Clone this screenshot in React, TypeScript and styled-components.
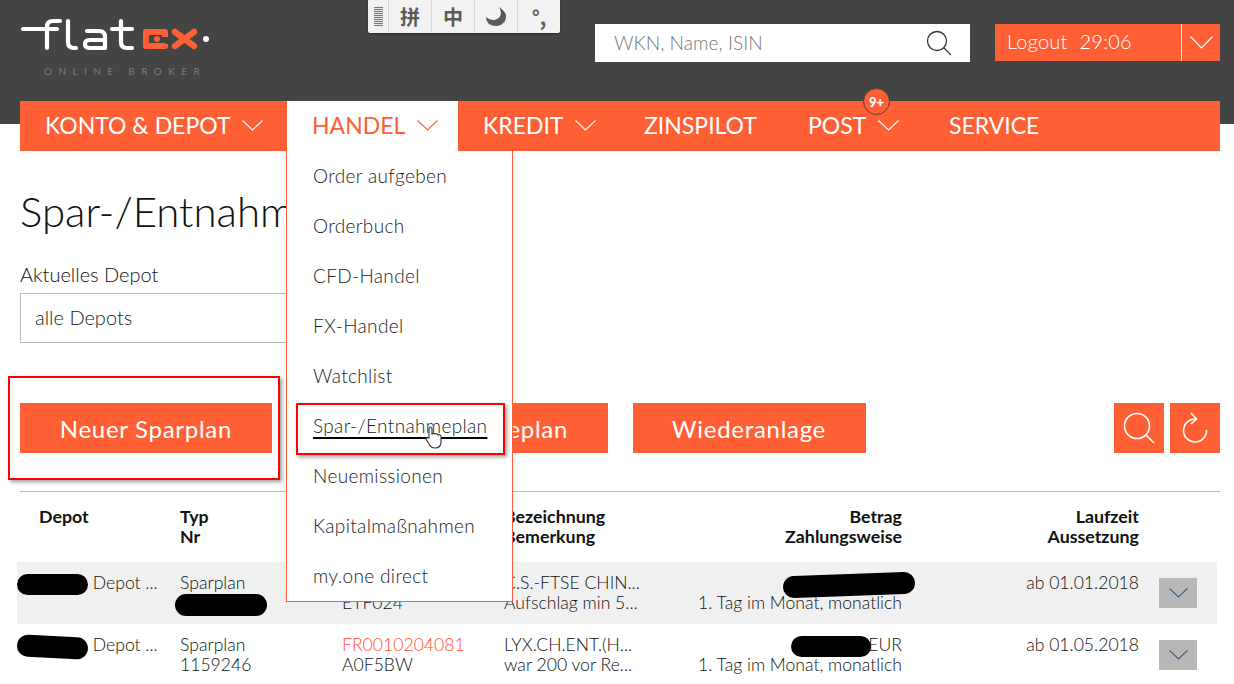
import React from "react";
import styled, { createGlobalStyle } from "styled-components";

const ORANGE = "#ff5f35";
const FONT = `"Lato", "Open Sans", sans-serif`;

const GlobalStyle = createGlobalStyle`
  html, body {
    margin: 0;
    height: 684px;
    overflow: hidden;
    background: #fff;
    font-family: ${FONT};
    color: #1f1f1f;
  }
  * { box-sizing: border-box; }
`;

const Page = styled.div`
  position: relative;
  width: 1234px;
  height: 684px;
  overflow: hidden;
`;

const Header = styled.header`
  height: 124px;
  background: #444444;
  padding: 15px 14px 0 20px;
  display: flex;
  align-items: flex-start;
`;

const LogoBox = styled.div`
  width: 575px;
`;

const LogoTagline = styled.div`
  margin: 10px 0 0 24px;
  font-size: 10px;
  line-height: 12px;
  letter-spacing: 6.4px;
  color: #7a7a7a;
  white-space: nowrap;
`;

const SearchBox = styled.div`
  width: 375px;
  height: 38px;
  margin-top: 9px;
  background: #fff;
  padding: 0 18px 0 19px;
  display: flex;
  align-items: center;
  justify-content: space-between;
  font-size: 19.2px;
  font-weight: 300;
  color: #777;
`;

const SearchText = styled.span`
  padding-bottom: 2px;
`;

const LogoutBox = styled.div`
  width: 225px;
  height: 37px;
  margin: 9px 0 0 25px;
  background: ${ORANGE};
  color: #fff;
  font-size: 20px;
  font-weight: 300;
  display: flex;
  align-items: center;
`;

const LogoutLabel = styled.span`
  flex: 1;
  padding: 0 0 3px 12px;
  display: flex;
  gap: 12px;
  letter-spacing: 0.2px;
`;

const LogoutToggle = styled.span`
  width: 39px;
  height: 100%;
  border-left: 1px solid #fff;
  display: flex;
  align-items: center;
  justify-content: center;
`;

const ImeBar = styled.div`
  position: absolute;
  left: 368px;
  top: 0;
  width: 192px;
  height: 33px;
  display: flex;
  background: #f2f2f2;
  border-radius: 0 0 2px 2px;
  box-shadow: 0 1px 2px rgba(0, 0, 0, 0.35);
`;

const ImeGrip = styled.div`
  width: 20px;
  height: 100%;
  display: flex;
  align-items: center;
  justify-content: center;
  &::before {
    content: "";
    width: 9px;
    height: 19px;
    background: repeating-linear-gradient(#777 0 1px, #e8e8e8 1px 2px);
  }
`;

const ImeKey = styled.div`
  width: 43px;
  height: 100%;
  border-left: 1px solid #d8d8d8;
  display: flex;
  align-items: center;
  justify-content: center;
  font-family: "Noto Sans CJK SC", sans-serif;
  font-weight: 700;
  font-size: 20px;
  color: #5a5a5a;
`;

const Nav = styled.nav`
  height: 50px;
  margin: -23px 14px 0 20px;
  background: ${ORANGE};
  display: flex;
  position: relative;
`;

const NavItem = styled.div<{ $active?: boolean; $w: number }>`
  position: relative;
  width: ${(p) => p.$w}px;
  padding: 0 0 2px 25px;
  display: flex;
  align-items: center;
  gap: 12px;
  font-size: 23px;
  white-space: nowrap;
  background: ${(p) => (p.$active ? "#fff" : "transparent")};
  color: ${(p) => (p.$active ? ORANGE : "#fff")};
`;

const Badge = styled.span`
  position: absolute;
  left: 80px;
  top: -13px;
  width: 27px;
  height: 27px;
  border-radius: 50%;
  background: ${ORANGE};
  border: 1px solid #444;
  color: #fff;
  font-size: 13px;
  font-weight: 900;
  display: flex;
  align-items: center;
  justify-content: center;
`;

const Dropdown = styled.ul`
  position: absolute;
  left: -1px;
  top: 50px;
  width: 227px;
  height: 451px;
  margin: 0;
  padding: 0;
  list-style: none;
  background: #fff;
  border: 1px solid ${ORANGE};
  border-top: 0;
  z-index: 2;
`;

const DropdownItem = styled.li<{ $hover?: boolean }>`
  height: 50px;
  padding: 0 0 2px 26px;
  display: flex;
  align-items: center;
  font-size: 19px;
  font-weight: 300;
  letter-spacing: 0.35px;
  color: #222;
  text-decoration: ${(p) => (p.$hover ? "underline 2px #000" : "none")};
  text-underline-offset: 4px;
`;

const Main = styled.main`
  padding: 35px 14px 0 20px;
`;

const Title = styled.h1`
  margin: 0;
  font-size: 42px;
  line-height: 50px;
  font-weight: 300;
  color: #111;
  white-space: nowrap;
`;

const FieldLabel = styled.div`
  margin-top: 27px;
  font-size: 20px;
  line-height: 22px;
  font-weight: 300;
  color: #111;
`;

const SelectBox = styled.div`
  width: 400px;
  height: 50px;
  margin-top: 8px;
  border: 1px solid #bbb;
  padding: 0 0 2px 14px;
  display: flex;
  align-items: center;
  font-size: 20px;
  font-weight: 300;
  color: #222;
`;

const Actions = styled.div`
  margin-top: 60px;
  display: flex;
  gap: 25px;
`;

const ActionButton = styled.div<{ $w: number }>`
  width: ${(p) => p.$w}px;
  height: 50px;
  background: ${ORANGE};
  color: #fff;
  font-size: 24px;
  letter-spacing: 0.7px;
  padding-right: 40px;
  display: flex;
  align-items: center;
  justify-content: flex-end;
  white-space: nowrap;
`;

const IconGroup = styled.div`
  margin-left: auto;
  display: flex;
  gap: 6px;
`;

const IconButton = styled.div`
  width: 50px;
  height: 50px;
  background: ${ORANGE};
  display: flex;
  align-items: center;
  justify-content: center;
`;

const Divider = styled.hr`
  margin: 38px 0 0;
  border: 0;
  border-top: 1px solid #bbb;
`;

const Table = styled.div`
  margin-left: -3px;
  width: 1200px;
`;

const Grid = styled.div`
  display: grid;
  grid-template-columns: 163px 162px 162px 165px 233px 237px 58px;
  padding-right: 20px;
  line-height: 20px;
`;

const HeadRow = styled(Grid)`
  padding-top: 14px;
  padding-bottom: 16px;
  font-size: 17.8px;
  font-weight: 700;
  color: #111;
`;

const Row = styled(Grid)<{ $shaded?: boolean }>`
  height: 62px;
  padding-top: 11px;
  font-size: 17.6px;
  font-weight: 300;
  background: ${(p) => (p.$shaded ? "#f0f0f0" : "transparent")};
  color: #111;
`;

const Cell = styled.div<{ $right?: boolean; $inset?: number }>`
  text-align: ${(p) => (p.$right ? "right" : "left")};
  padding-left: ${(p) => p.$inset ?? 0}px;
  white-space: nowrap;
`;

const IsinLink = styled.span`
  color: #ff5030;
`;

const Redacted = styled.span<{ $w: number; $h?: number; $tilt?: number; $ml?: number; $mr?: number }>`
  display: inline-block;
  vertical-align: middle;
  width: ${(p) => p.$w}px;
  height: ${(p) => p.$h ?? 21}px;
  margin: -3px ${(p) => p.$mr ?? 0}px -3px ${(p) => p.$ml ?? 0}px;
  border-radius: 11px;
  background: #000;
  transform: rotate(${(p) => p.$tilt ?? 0}deg);
`;

const ExpandButton = styled.div`
  width: 38px;
  height: 30px;
  margin: 5px 0 0 20px;
  background: #b8b8b8;
  display: flex;
  align-items: center;
  justify-content: center;
`;

const Annotation = styled.div<{ $x: number; $y: number; $w: number; $h: number }>`
  position: absolute;
  left: ${(p) => p.$x}px;
  top: ${(p) => p.$y}px;
  width: ${(p) => p.$w}px;
  height: ${(p) => p.$h}px;
  border: 2px solid #f00;
  box-shadow: 2px 2px 4px rgba(0, 0, 0, 0.4);
  z-index: 3;
`;

const HandCursor = styled.svg`
  position: absolute;
  left: 424px;
  top: 425px;
  z-index: 4;
`;

const Chevron = ({ color = "#fff", w = 21, h = 11 }: { color?: string; w?: number; h?: number }) => (
  <svg width={w} height={h} viewBox={`0 0 ${w} ${h}`} fill="none">
    <polyline points={`0.5,0.5 ${w / 2},${h - 1} ${w - 0.5},0.5`} stroke={color} strokeWidth="1.1" />
  </svg>
);

const Logo = () => (
  <svg width="195" height="40" viewBox="20 15 195 40" fill="none" style={{ display: "block" }}>
    <g stroke="#fff" strokeWidth="4.2" strokeLinecap="round" strokeLinejoin="round">
      <path d="M23 29 H57" />
      <path d="M60 21 H53 Q47 21 47 27 V48" />
      <path d="M68 21 V42 Q68 48 74 48 H76" />
      <path d="M87 31 H99 Q105 31 105 37 V48 H90 Q85 48 85 44 Q85 40 90 40 H105" />
      <path d="M121 21 V42 Q121 48 127 48 H132" />
      <path d="M112 29 H132" />
    </g>
    <g stroke={ORANGE} strokeWidth="6">
      <path d="M165 37 V32 H146 V46 H165 V44" strokeLinejoin="round" />
      <path d="M175 32 L194 46 M194 32 L175 46" strokeLinecap="round" strokeWidth="6.4" />
    </g>
    <circle cx="157" cy="39" r="3" fill={ORANGE} />
    <circle cx="206" cy="39" r="3" fill="#fff" />
  </svg>
);

const menuItems = [
  "Order aufgeben",
  "Orderbuch",
  "CFD-Handel",
  "FX-Handel",
  "Watchlist",
  "Spar-/Entnahmeplan",
  "Neuemissionen",
  "Kapitalmaßnahmen",
  "my.one direct",
];

export default function App() {
  return (
    <Page>
      <GlobalStyle />
      <Header>
        <LogoBox>
          <Logo />
          <LogoTagline>ONLINE BROKER</LogoTagline>
        </LogoBox>
        <SearchBox>
          <SearchText>WKN, Name, ISIN</SearchText>
          <svg width="26" height="26" viewBox="0 0 26 26" fill="none" stroke="#333" strokeWidth="1.3">
            <circle cx="11" cy="11" r="9.5" />
            <line x1="18" y1="18" x2="25" y2="25" />
          </svg>
        </SearchBox>
        <LogoutBox>
          <LogoutLabel>
            <span>Logout</span>
            <span>29:06</span>
          </LogoutLabel>
          <LogoutToggle>
            <Chevron w={23} h={13} />
          </LogoutToggle>
        </LogoutBox>
      </Header>

      <ImeBar>
        <ImeGrip />
        <ImeKey>拼</ImeKey>
        <ImeKey>中</ImeKey>
        <ImeKey>
          <svg width="24" height="22" viewBox="0 0 24 22">
            <path d="M15 1 Q20 10 12 13.5 Q7 15.5 2 11 Q2 20 13 20 Q23 18 22 9 Q20 4 15 1 Z" fill="#5a5a5a" />
          </svg>
        </ImeKey>
        <ImeKey>°,</ImeKey>
      </ImeBar>

      <Nav>
        <NavItem $w={267}>
          KONTO &amp; DEPOT
          <Chevron />
        </NavItem>
        <NavItem $w={171} $active>
          HANDEL
          <Chevron color={ORANGE} />
          <Dropdown>
            {menuItems.map((item) => (
              <DropdownItem key={item} $hover={item === "Spar-/Entnahmeplan"}>
                {item}
              </DropdownItem>
            ))}
          </Dropdown>
        </NavItem>
        <NavItem $w={161}>
          KREDIT
          <Chevron />
        </NavItem>
        <NavItem $w={164}>ZINSPILOT</NavItem>
        <NavItem $w={141}>
          POST
          <Chevron />
          <Badge>9+</Badge>
        </NavItem>
        <NavItem $w={150}>SERVICE</NavItem>
      </Nav>

      <Main>
        <Title>Spar-/Entnahmeplan</Title>
        <FieldLabel>Aktuelles Depot</FieldLabel>
        <SelectBox>alle Depots</SelectBox>

        <Actions>
          <ActionButton $w={252}>Neuer Sparplan</ActionButton>
          <ActionButton $w={311}>Neuer Entnahmeplan</ActionButton>
          <ActionButton $w={233}>Wiederanlage</ActionButton>
          <IconGroup>
            <IconButton>
              <svg width="34" height="34" viewBox="0 0 34 34" fill="none" stroke="#fff" strokeWidth="1.6">
                <circle cx="15" cy="15" r="12.5" />
                <line x1="24" y1="24" x2="32" y2="32" />
              </svg>
            </IconButton>
            <IconButton>
              <svg width="30" height="36" viewBox="0 0 30 36" fill="none" stroke="#fff" strokeWidth="1.6">
                <path d="M16 9 A11.5 11.5 0 1 0 26.5 20" />
                <polyline points="11,3 16.5,9 11,14" />
              </svg>
            </IconButton>
          </IconGroup>
        </Actions>

        <Divider />

        <Table>
          <HeadRow>
            <Cell $inset={22}>Depot</Cell>
            <Cell>
              Typ
              <br />
              Nr
            </Cell>
            <Cell />
            <Cell>
              Bezeichnung
              <br />
              Bemerkung
            </Cell>
            <Cell $right>
              Betrag
              <br />
              Zahlungsweise
            </Cell>
            <Cell $right>
              Laufzeit
              <br />
              Aussetzung
            </Cell>
            <Cell />
          </HeadRow>

          <Row $shaded>
            <Cell>
              <Redacted $w={71} /> Depot ...
            </Cell>
            <Cell>
              Sparplan
              <br />
              <Redacted $w={92} $h={22} $ml={-5} />
            </Cell>
            <Cell>
              &nbsp;
              <br />
              ETF024
            </Cell>
            <Cell>
              C.S.-FTSE CHIN...
              <br />
              Aufschlag min 5...
            </Cell>
            <Cell $right>
              <Redacted $w={132} $h={22} $tilt={-2} $mr={-13} />
              <br />
              1. Tag im Monat, monatlich
            </Cell>
            <Cell $right>ab 01.01.2018</Cell>
            <ExpandButton>
              <Chevron color="#3f5f80" w={19} h={10} />
            </ExpandButton>
          </Row>

          <Row>
            <Cell>
              <Redacted $w={71} $h={22} $tilt={3} /> Depot ...
            </Cell>
            <Cell>
              Sparplan
              <br />
              1159246
            </Cell>
            <Cell>
              <IsinLink>FR0010204081</IsinLink>
              <br />
              A0F5BW
            </Cell>
            <Cell>
              LYX.CH.ENT.(H...
              <br />
              war 200 vor Re...
            </Cell>
            <Cell $right>
              <Redacted $w={80} $mr={-3} />
              EUR
              <br />
              1. Tag im Monat, monatlich
            </Cell>
            <Cell $right>ab 01.05.2018</Cell>
            <ExpandButton>
              <Chevron color="#3f5f80" w={19} h={10} />
            </ExpandButton>
          </Row>
        </Table>
      </Main>

      <Annotation $x={8} $y={376} $w={272} $h={104} />
      <Annotation $x={296} $y={403} $w={209} $h={52} />
      <HandCursor width="20" height="24" viewBox="0 0 20 24">
        <path
          d="M5 13 V4 Q5 2 6.5 2 Q8 2 8 4 V9 Q10 8 11 9 Q13 8 14 10 Q16 9 17 11 V17 Q17 23 11 23 Q7 23 5 19 L2 14 Q2 12 4 13 Z"
          fill="#fff"
          stroke="#333"
          strokeWidth="1.1"
        />
      </HandCursor>
    </Page>
  );
}
